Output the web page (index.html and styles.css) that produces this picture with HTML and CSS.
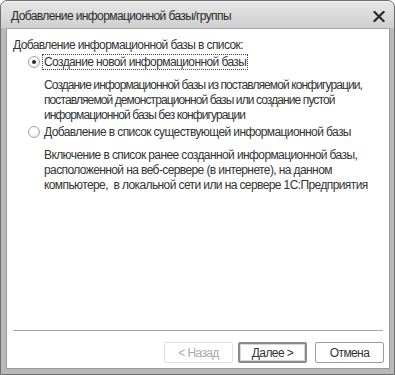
FILE: index.html
```html
<!DOCTYPE html>
<html lang="ru">
<head>
<meta charset="utf-8">
<title>Добавление информационной базы/группы</title>
<link rel="stylesheet" href="styles.css">
</head>
<body>
<div class="window">
  <div class="titlebar">
    <span class="title">Добавление информационной базы/группы</span>
    <svg class="close" width="12" height="11" viewBox="0 0 12 11"><path d="M1.5 1 L10.5 10 M10.5 1 L1.5 10" stroke="#2a2a2a" stroke-width="2.2" stroke-linecap="square"/></svg>
  </div>
  <div class="content">
    <div class="heading">Добавление информационной базы в список:</div>
    <div class="option">
      <span class="radio checked"></span>
      <span class="label focused">Создание новой информационной базы</span>
    </div>
    <div class="desc tight">Создание информационной базы из поставляемой конфигурации,<br>поставляемой демонстрационной базы или создание пустой<br>информационной базы без конфигурации</div>
    <div class="option">
      <span class="radio"></span>
      <span class="label">Добавление в список существующей информационной базы</span>
    </div>
    <div class="desc">Включение в список ранее созданной информационной базы,<br>расположенной на веб-сервере (в интернете), на данном<br>компьютере,&nbsp; в локальной сети или на сервере 1С:Предприятия</div>
    <div class="spacer"></div>
    <div class="separator"></div>
    <div class="buttons">
      <div class="btn disabled">&lt; Назад</div>
      <div class="btn default">Далее &gt;</div>
      <div class="btn cancel">Отмена</div>
    </div>
  </div>
</div>
</body>
</html>
```
FILE: styles.css
```css
* { box-sizing: border-box; }
html, body { margin: 0; padding: 0; background: #fff; }
body {
  font-family: "Liberation Sans", Arial, sans-serif;
  font-size: 12px;
  letter-spacing: -0.6px;
  color: #333;
}
.window {
  width: 395px;
  height: 375px;
  border: 1px solid #6e6e6e;
  border-radius: 7px 7px 0 0;
  background: #b9b9b9;
  display: flex;
  flex-direction: column;
  overflow: hidden;
}
.titlebar {
  height: 27px;
  flex: none;
  display: flex;
  align-items: center;
  justify-content: space-between;
  padding: 2px 9px 0 10px;
  background: linear-gradient(#e6e6e6, #cfcfcf);
  border-top: 1px solid #f4f4f4;
}
.title { color: #2a2a2a; }
.close { display: block; margin-top: 1px; }
.content {
  flex: 1;
  margin: 0 4px 5px 5px;
  background: #fff;
  border: 1px solid #9a9a9a;
  border-top-color: #a8a8a8;
  display: flex;
  flex-direction: column;
  padding: 9px 5px 5px 6px;
  white-space: nowrap;
}
.heading { line-height: 15px; height: 15px; }
.option {
  display: flex;
  align-items: center;
  height: 16px;
  margin-top: 1px;
  padding-left: 15px;
}
.radio {
  width: 12px;
  height: 12px;
  border-radius: 50%;
  border: 1px solid #a4a4a4;
  background: radial-gradient(circle at 40% 35%, #ffffff 30%, #e4e4e4 100%);
  margin-right: 2px;
  position: relative;
  flex: none;
}
.radio.checked::after {
  content: "";
  position: absolute;
  left: 3px;
  top: 3px;
  width: 4px;
  height: 4px;
  border-radius: 50%;
  background: #2a2a2a;
}
.label {
  line-height: 14px;
  padding: 0 1px;
  border: 1px solid transparent;
}
.label.focused { border: 1px dotted #444; }
.desc {
  margin: 8px 0 0 31px;
  line-height: 15px;
}
.desc.tight { letter-spacing: -0.9px; }
.spacer { flex: 1; }
.separator {
  height: 1px;
  background: #a4a4a4;
  margin: 0 1px 0 0;
}
.buttons {
  display: flex;
  justify-content: flex-end;
  gap: 5px;
  margin-top: 11px;
}
.btn {
  width: 69px;
  height: 21px;
  display: flex;
  align-items: center;
  justify-content: center;
  border: 1px solid #9c9c9c;
  border-radius: 2px;
  background: #fff;
  color: #333;
}
.btn.disabled { border-color: #e2e2e2; color: #a8a8a8; }
.btn.default {
  border: 2px solid #8a8a8a;
  box-shadow: inset 0 0 0 1px #d8d8d8;
}
.btn.cancel { margin-left: 3px; }
```
